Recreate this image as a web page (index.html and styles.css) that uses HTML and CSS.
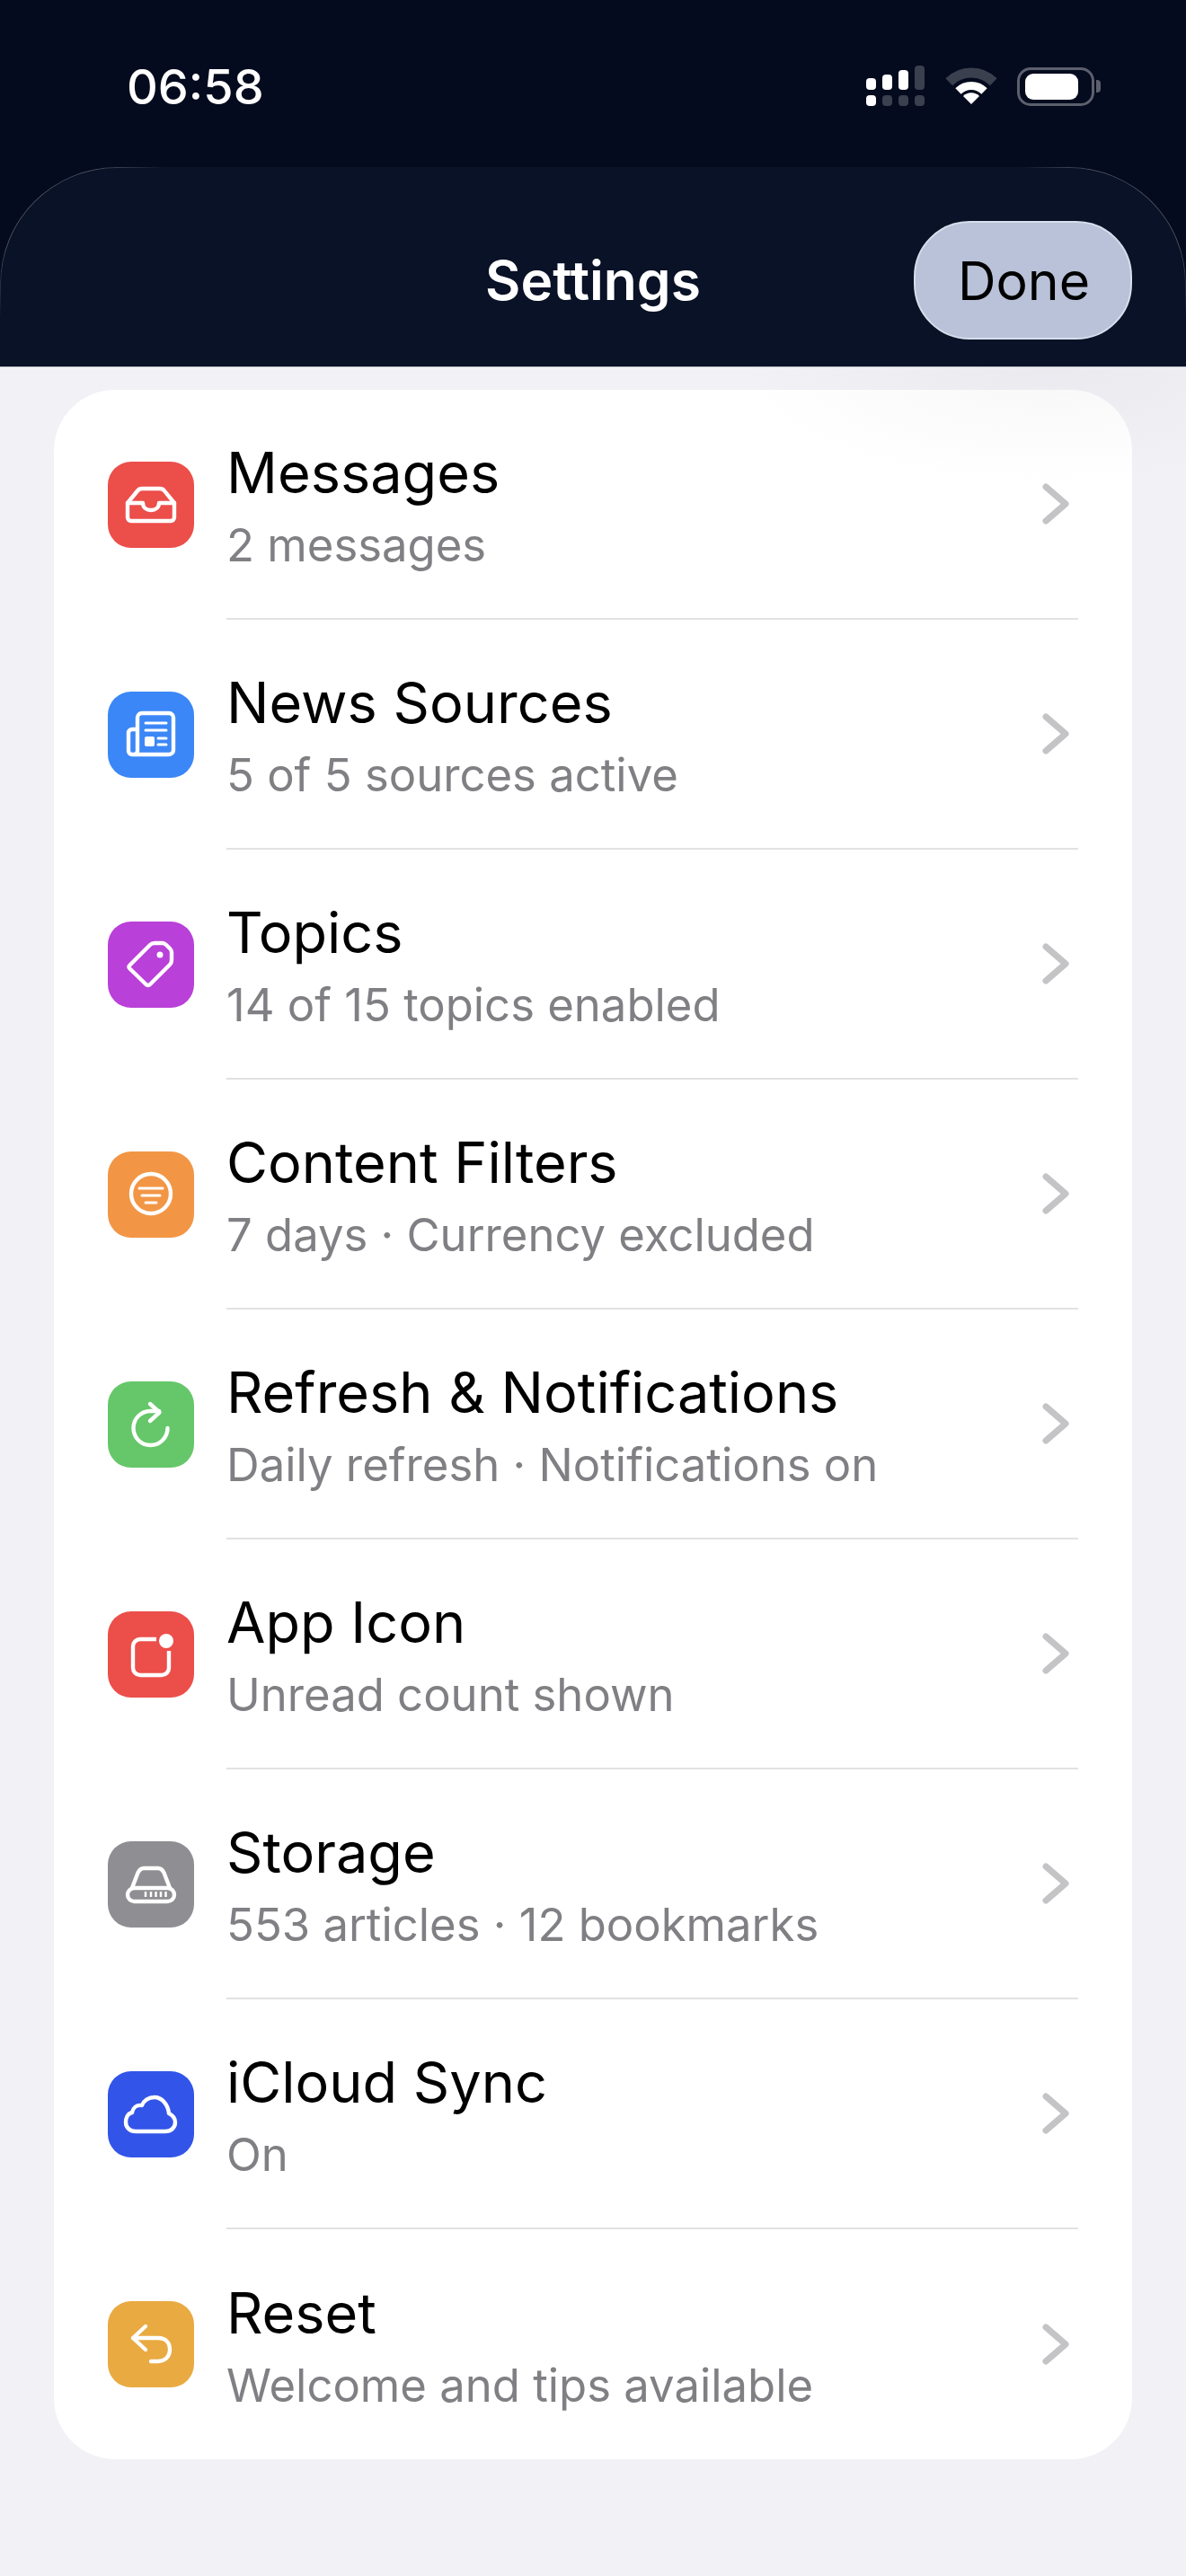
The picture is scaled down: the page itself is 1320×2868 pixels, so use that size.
FILE: index.html
```html
<!DOCTYPE html>
<html lang="en">
<head>
    <meta charset="UTF-8">
    <meta name="viewport" content="width=device-width, initial-scale=1.0">
    <title>Settings</title>
    <link rel="stylesheet" href="styles.css">
</head>
<body>
    <div class="status-bar">
        <div class="time">06:58</div>
        <div class="status-icons">
            <svg class="signal" width="66" height="46" viewBox="0 0 66 46">
                <rect class="on" x="0" y="14" width="11" height="13" rx="4"/>
                <rect class="on" x="18" y="10" width="11" height="17" rx="4"/>
                <rect class="on" x="36" y="5" width="11" height="22" rx="4"/>
                <rect class="off" x="54" y="0" width="11" height="27" rx="4"/>
                <rect class="on" x="0" y="33" width="11" height="12" rx="4"/>
                <rect class="off" x="18" y="33" width="11" height="12" rx="4"/>
                <rect class="off" x="36" y="33" width="11" height="12" rx="4"/>
                <rect class="off" x="54" y="33" width="11" height="12" rx="4"/>
            </svg>
            <svg class="wifi" width="58" height="42" viewBox="0 0 58 42">
                <path d="M4.25 16.25A35 35 0 0 1 53.75 16.25" fill="none" stroke="#3a404e" stroke-width="11"/>
                <path d="M14.5 26.5A20.5 20.5 0 0 1 43.5 26.5" fill="none" stroke="#fff" stroke-width="9"/>
                <path d="M29 41L20 32A12.7 12.7 0 0 1 38 32Z" fill="#fff"/>
            </svg>
            <div class="battery">
                <div class="battery-body"><div class="battery-level"></div></div>
                <div class="battery-nub"></div>
            </div>
        </div>
    </div>

    <div class="nav-panel">
        <div class="nav-spacer"></div>
        <div class="nav-title">Settings</div>
        <div class="nav-action"><button class="done-btn">Done</button></div>
    </div>

    <div class="content">
        <div class="glow"></div>
        <div class="card">
            <div class="row">
                <div class="row-icon red">
                    <svg viewBox="0 0 96 96"><path d="M22 46L33 32.5Q35 30 38 30H58Q61 30 63 32.5L74 46V62A4 4 0 0 1 70 66H26A4 4 0 0 1 22 62Z"/><path d="M22 46H39C39 51 43 54 48 54S57 51 57 46H74"/></svg>
                </div>
                <div class="row-body">
                    <div class="row-text">
                        <div class="row-title">Messages</div>
                        <div class="row-sub">2 messages</div>
                    </div>
                    <svg class="chevron" width="30" height="46" viewBox="0 0 30 46"><path d="M4 4L26 23L4 42"/></svg>
                </div>
            </div>
            <div class="row">
                <div class="row-icon blue">
                    <svg viewBox="0 0 96 96"><path d="M33 42H27A4 4 0 0 0 23 46V66A4 4 0 0 0 27 70H68A5 5 0 0 0 73 65V29A5 5 0 0 0 68 24H38A5 5 0 0 0 33 29V66A4 4 0 0 1 29 70"/><path class="thin" d="M42 35H65M42 43H65M56 52H65M56 59H65"/><rect class="solid" x="41" y="50" width="11" height="11" rx="2"/></svg>
                </div>
                <div class="row-body">
                    <div class="row-text">
                        <div class="row-title">News Sources</div>
                        <div class="row-sub">5 of 5 sources active</div>
                    </div>
                    <svg class="chevron" width="30" height="46" viewBox="0 0 30 46"><path d="M4 4L26 23L4 42"/></svg>
                </div>
            </div>
            <div class="row">
                <div class="row-icon purple">
                    <svg viewBox="0 0 96 96"><path d="M24.5 48.5L47 26Q49 24 52 24H61Q63 24 65 26L69 30Q71 32 71 34V43Q71 46 69 48L47 70Q45 72 42.5 70L24.5 52.5Q22.5 50.5 24.5 48.5Z"/><circle class="solid" cx="58" cy="37" r="3.5"/></svg>
                </div>
                <div class="row-body">
                    <div class="row-text">
                        <div class="row-title">Topics</div>
                        <div class="row-sub">14 of 15 topics enabled</div>
                    </div>
                    <svg class="chevron" width="30" height="46" viewBox="0 0 30 46"><path d="M4 4L26 23L4 42"/></svg>
                </div>
            </div>
            <div class="row">
                <div class="row-icon orange">
                    <svg viewBox="0 0 96 96"><circle cx="48" cy="47" r="22"/><path class="thin" d="M35 41H61M38 49H58M42 57H54"/></svg>
                </div>
                <div class="row-body">
                    <div class="row-text">
                        <div class="row-title">Content Filters</div>
                        <div class="row-sub">7 days · Currency excluded</div>
                    </div>
                    <svg class="chevron" width="30" height="46" viewBox="0 0 30 46"><path d="M4 4L26 23L4 42"/></svg>
                </div>
            </div>
            <div class="row">
                <div class="row-icon green">
                    <svg viewBox="0 0 96 96"><path d="M66.5 52A19 19 0 1 1 47.5 33H57"/><path d="M47 25L57.5 34.5L47 44"/></svg>
                </div>
                <div class="row-body">
                    <div class="row-text">
                        <div class="row-title">Refresh &amp; Notifications</div>
                        <div class="row-sub">Daily refresh · Notifications on</div>
                    </div>
                    <svg class="chevron" width="30" height="46" viewBox="0 0 30 46"><path d="M4 4L26 23L4 42"/></svg>
                </div>
            </div>
            <div class="row">
                <div class="row-icon red">
                    <svg viewBox="0 0 96 96"><path class="square" d="M54 31H36A8 8 0 0 0 28 39V63A8 8 0 0 0 36 71H60A8 8 0 0 0 68 63V44"/><circle class="solid" cx="65" cy="33" r="8"/></svg>
                </div>
                <div class="row-body">
                    <div class="row-text">
                        <div class="row-title">App Icon</div>
                        <div class="row-sub">Unread count shown</div>
                    </div>
                    <svg class="chevron" width="30" height="46" viewBox="0 0 30 46"><path d="M4 4L26 23L4 42"/></svg>
                </div>
            </div>
            <div class="row">
                <div class="row-icon gray">
                    <svg viewBox="0 0 96 96"><rect x="22" y="52" width="52" height="15" rx="7.5"/><path d="M27 52L33.5 35Q36 30 40 30H56Q60 30 62.5 35L69 52"/><path class="bars" d="M42 56V62M48 56V62M53.5 56V62M59 56V62M64.5 56V62"/></svg>
                </div>
                <div class="row-body">
                    <div class="row-text">
                        <div class="row-title">Storage</div>
                        <div class="row-sub">553 articles · 12 bookmarks</div>
                    </div>
                    <svg class="chevron" width="30" height="46" viewBox="0 0 30 46"><path d="M4 4L26 23L4 42"/></svg>
                </div>
            </div>
            <div class="row">
                <div class="row-icon indigo">
                    <svg viewBox="0 0 96 96"><path d="M31 67H64C70 67 75 63 75 57C75 52 72 49 68 47C67 37 60 29 52 29C45 29 40 33 38 38C32 37 28 41 27 46C22 47 20 52 20 57C20 63 25 67 31 67Z"/></svg>
                </div>
                <div class="row-body">
                    <div class="row-text">
                        <div class="row-title">iCloud Sync</div>
                        <div class="row-sub">On</div>
                    </div>
                    <svg class="chevron" width="30" height="46" viewBox="0 0 30 46"><path d="M4 4L26 23L4 42"/></svg>
                </div>
            </div>
            <div class="row">
                <div class="row-icon amber">
                    <svg viewBox="0 0 96 96"><path d="M42 28L28 41L42 54M28 41H56C65 41 69 47 69 54C69 62 63 67 56 67H48"/></svg>
                </div>
                <div class="row-body">
                    <div class="row-text">
                        <div class="row-title">Reset</div>
                        <div class="row-sub">Welcome and tips available</div>
                    </div>
                    <svg class="chevron" width="30" height="46" viewBox="0 0 30 46"><path d="M4 4L26 23L4 42"/></svg>
                </div>
            </div>
        </div>
    </div>
</body>
</html>
```

FILE: styles.css
```css
* {
    box-sizing: border-box;
}

body {
    margin: 0;
    width: 1320px;
    height: 2868px;
    overflow: hidden;
    font-family: Inter, "Liberation Sans", sans-serif;
    background-color: #f1f1f6;
    color: #000;
}

.status-bar {
    height: 186px;
    padding: 6px 95px 0 141px;
    background-color: #050b1e;
    display: flex;
    align-items: center;
    justify-content: space-between;
}

.time {
    color: #fff;
    font-size: 54px;
    font-weight: 500;
}

.status-icons {
    display: flex;
    align-items: center;
    gap: 22px;
}

.signal .on {
    fill: #fff;
}

.signal .off {
    fill: #3a404e;
}

.battery {
    display: flex;
    align-items: center;
    gap: 2px;
}

.battery-body {
    width: 86px;
    height: 43px;
    padding: 4px 6px;
    border: 3px solid #5c606d;
    border-radius: 15px;
}

.battery-level {
    width: 59px;
    height: 29px;
    background-color: #fff;
    border-radius: 9px;
}

.battery-nub {
    width: 5px;
    height: 14px;
    background-color: #5c606d;
    border-radius: 0 4px 4px 0;
}

.nav-panel {
    position: relative;
    height: 223px;
    padding: 30px 60px 0 0;
    background-color: #050b1e;
    display: grid;
    grid-template-columns: 1fr auto 1fr;
    align-items: center;
    border-bottom: 1px solid #c5c7cf;
}

.nav-panel::before {
    content: "";
    position: absolute;
    inset: 0;
    background-color: #091226;
    border-radius: 130px 130px 0 0;
}

/* hairline on the rounded corners only, fades out along the edges */
.nav-panel::after {
    content: "";
    position: absolute;
    inset: 0;
    border: 1px solid rgba(255, 255, 255, 0.28);
    border-bottom: none;
    border-radius: 130px 130px 0 0;
    -webkit-mask-image: linear-gradient(to right, #000 8%, transparent 14%, transparent 86%, #000 92%), linear-gradient(to bottom, #000 40%, transparent 76%);
    -webkit-mask-composite: source-in;
    mask-image: linear-gradient(to right, #000 8%, transparent 14%, transparent 86%, #000 92%), linear-gradient(to bottom, #000 40%, transparent 76%);
    mask-composite: intersect;
}

.nav-title {
    position: relative;
    margin-left: 60px;
    color: #fff;
    font-size: 60.5px;
    font-weight: 600;
}

.nav-action {
    position: relative;
    display: flex;
    justify-content: flex-end;
}

.done-btn {
    width: 243px;
    height: 132px;
    padding: 0 0 0 2px;
    font-family: inherit;
    font-size: 59px;
    color: #000;
    background-color: #b9c2d8;
    border: 2px solid #d6deec;
    border-radius: 62px;
}

.content {
    position: relative;
    padding: 25px 60px 0;
}

.glow {
    position: absolute;
    top: 0;
    right: 0;
    width: 500px;
    height: 130px;
    background: radial-gradient(ellipse at 70% 0, rgba(120, 120, 135, 0.06), rgba(120, 120, 135, 0) 70%);
}

.card {
    background-color: #fff;
    border-radius: 68px;
}

.row {
    height: 256px;
    padding: 0 60px;
    display: flex;
    align-items: center;
    gap: 36px;
}

.row-icon {
    width: 96px;
    height: 96px;
    flex-shrink: 0;
    border-radius: 26px;
}

.row-icon svg {
    display: block;
    width: 96px;
    height: 96px;
    fill: none;
    stroke: #fff;
    stroke-width: 4.4;
    stroke-linecap: round;
    stroke-linejoin: round;
}

.row-icon .thin {
    stroke-width: 3;
}

.row-icon .bars {
    stroke-width: 2.5;
    stroke-linecap: butt;
}

.row-icon .solid {
    fill: #fff;
    stroke: none;
}

.row-icon .square {
    stroke-linecap: butt;
}

.red {
    background-color: #ec4e4a;
}

.blue {
    background-color: #3c87f7;
}

.purple {
    background-color: #b940d8;
}

.orange {
    background-color: #f29646;
}

.green {
    background-color: #65c76a;
}

.gray {
    background-color: #8e8e93;
}

.indigo {
    background-color: #3254e8;
}

.amber {
    background-color: #e9aa41;
}

.row-body {
    flex: 1;
    height: 100%;
    padding-right: 10px;
    display: flex;
    align-items: center;
    justify-content: space-between;
    border-bottom: 2px solid #e2e2e4;
}

.row:last-child .row-body {
    border-bottom: none;
}

.row-text {
    display: flex;
    flex-direction: column;
    gap: 15px;
    padding-top: 4px;
}

.row-title {
    font-size: 63px;
    line-height: 72px;
}

.row-sub {
    font-size: 50.8px;
    line-height: 60px;
    color: #808084;
}

.chevron {
    fill: none;
    stroke: #c4c4c6;
    stroke-width: 7;
    stroke-linecap: round;
    stroke-linejoin: round;
}
```
